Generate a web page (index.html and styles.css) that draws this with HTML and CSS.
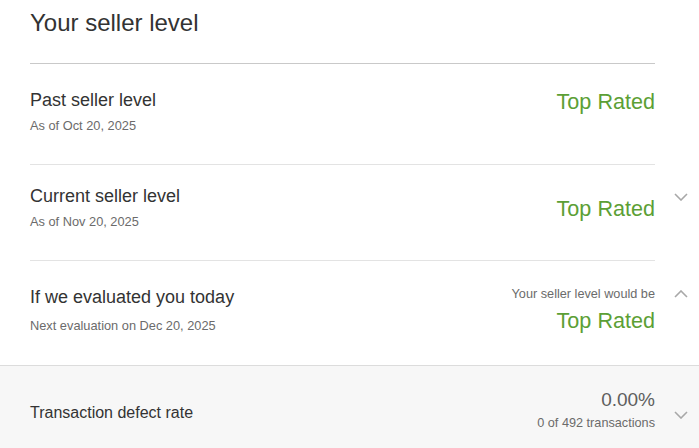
FILE: index.html
```html
<!DOCTYPE html>
<html lang="en">
<head>
<meta charset="utf-8">
<title>Your seller level</title>
<link rel="stylesheet" href="styles.css">
</head>
<body>
<div class="card">
  <div class="inner">
    <div class="header">
      <h1 class="title">Your seller level</h1>
    </div>

    <div class="row row-past">
      <div class="row-main">
        <div class="left">
          <div class="label">Past seller level</div>
          <div class="sub">As of Oct 20, 2025</div>
        </div>
        <div class="right">
          <div class="level">Top Rated</div>
        </div>
      </div>
      <div class="chev-col"></div>
    </div>

    <div class="row row-current">
      <div class="row-main">
        <div class="left">
          <div class="label">Current seller level</div>
          <div class="sub">As of Nov 20, 2025</div>
        </div>
        <div class="right">
          <div class="level">Top Rated</div>
        </div>
      </div>
      <div class="chev-col">
        <svg class="chev" width="14" height="8" viewBox="0 0 14 8"><polyline points="1,1 7,7 13,1" fill="none" stroke="#a8a8a8" stroke-width="1.6"/></svg>
      </div>
    </div>

    <div class="row row-today">
      <div class="row-main">
        <div class="left">
          <div class="label">If we evaluated you today</div>
          <div class="sub">Next evaluation on Dec 20, 2025</div>
        </div>
        <div class="right">
          <div class="note">Your seller level would be</div>
          <div class="level">Top Rated</div>
        </div>
      </div>
      <div class="chev-col">
        <svg class="chev" width="14" height="8" viewBox="0 0 14 8"><polyline points="1,7 7,1 13,7" fill="none" stroke="#a8a8a8" stroke-width="1.6"/></svg>
      </div>
    </div>
  </div>

  <div class="metric">
    <div class="row row-metric">
      <div class="row-main">
        <div class="left">
          <div class="metric-label">Transaction defect rate</div>
        </div>
        <div class="right">
          <div class="pct">0.00%</div>
          <div class="note">0 of 492 transactions</div>
        </div>
      </div>
      <div class="chev-col">
        <svg class="chev" width="14" height="8" viewBox="0 0 14 8"><polyline points="1,1 7,7 13,1" fill="none" stroke="#a8a8a8" stroke-width="1.6"/></svg>
      </div>
    </div>
  </div>
</div>
</body>
</html>
```

FILE: styles.css
```css
html, body {
  margin: 0;
  padding: 0;
  background: #ffffff;
}

body {
  font-family: "Liberation Sans", Arial, sans-serif;
  color: #333333;
}

.card {
  width: 699px;
}

.inner {
  padding-left: 30px;
}

.header {
  margin-right: 44px;
  padding: 9px 0 26px;
  border-bottom: 1px solid #c9c9c9;
}

.title {
  margin: 0;
  font-size: 24px;
  line-height: 28px;
  font-weight: normal;
  color: #333333;
}

.row {
  display: flex;
}

.row-main {
  flex: 1;
  display: flex;
  justify-content: space-between;
  align-items: flex-start;
}

.chev-col {
  width: 44px;
  flex: none;
  padding-left: 19px;
  box-sizing: border-box;
}

.chev {
  display: block;
}

.left {
  display: flex;
  flex-direction: column;
}

.right {
  display: flex;
  flex-direction: column;
  align-items: flex-end;
  text-align: right;
}

.label {
  font-size: 18px;
  line-height: 22px;
  color: #333333;
}

.sub {
  margin-top: 7px;
  font-size: 12.8px;
  line-height: 16px;
  color: #6b6b6b;
}

.level {
  font-size: 21.6px;
  line-height: 24px;
  color: #5c9f35;
}

.note {
  font-size: 12.7px;
  line-height: 16px;
  color: #6b6b6b;
}

/* Past */
.row-past .row-main {
  padding: 25px 0 30px;
  border-bottom: 1px solid #e3e3e3;
}
.row-past .level {
  margin-top: 1px;
}

/* Current */
.row-current .row-main {
  padding: 20px 0 30px;
  border-bottom: 1px solid #e3e3e3;
}
.row-current .level {
  margin-top: 12px;
}
.row-current .chev {
  margin-top: 28px;
}

/* Today */
.row-today .row-main {
  padding: 25px 0 31px;
}
.row-today .sub {
  margin-top: 10px;
}
.row-today .level {
  margin-top: 7px;
}
.row-today .chev {
  margin-top: 29px;
}

/* Metric */
.metric {
  padding-left: 30px;
  background: #f7f7f7;
  border-top: 1px solid #dcdcdc;
}

.row-metric .row-main {
  padding: 23px 0 20px;
}

.metric-label {
  margin-top: 14px;
  font-size: 16px;
  line-height: 20px;
  color: #333333;
}

.pct {
  font-size: 19px;
  line-height: 22px;
  color: #5e5e5e;
}

.row-metric .note {
  margin-top: 4px;
}

.row-metric .chev {
  margin-top: 45px;
}
```
